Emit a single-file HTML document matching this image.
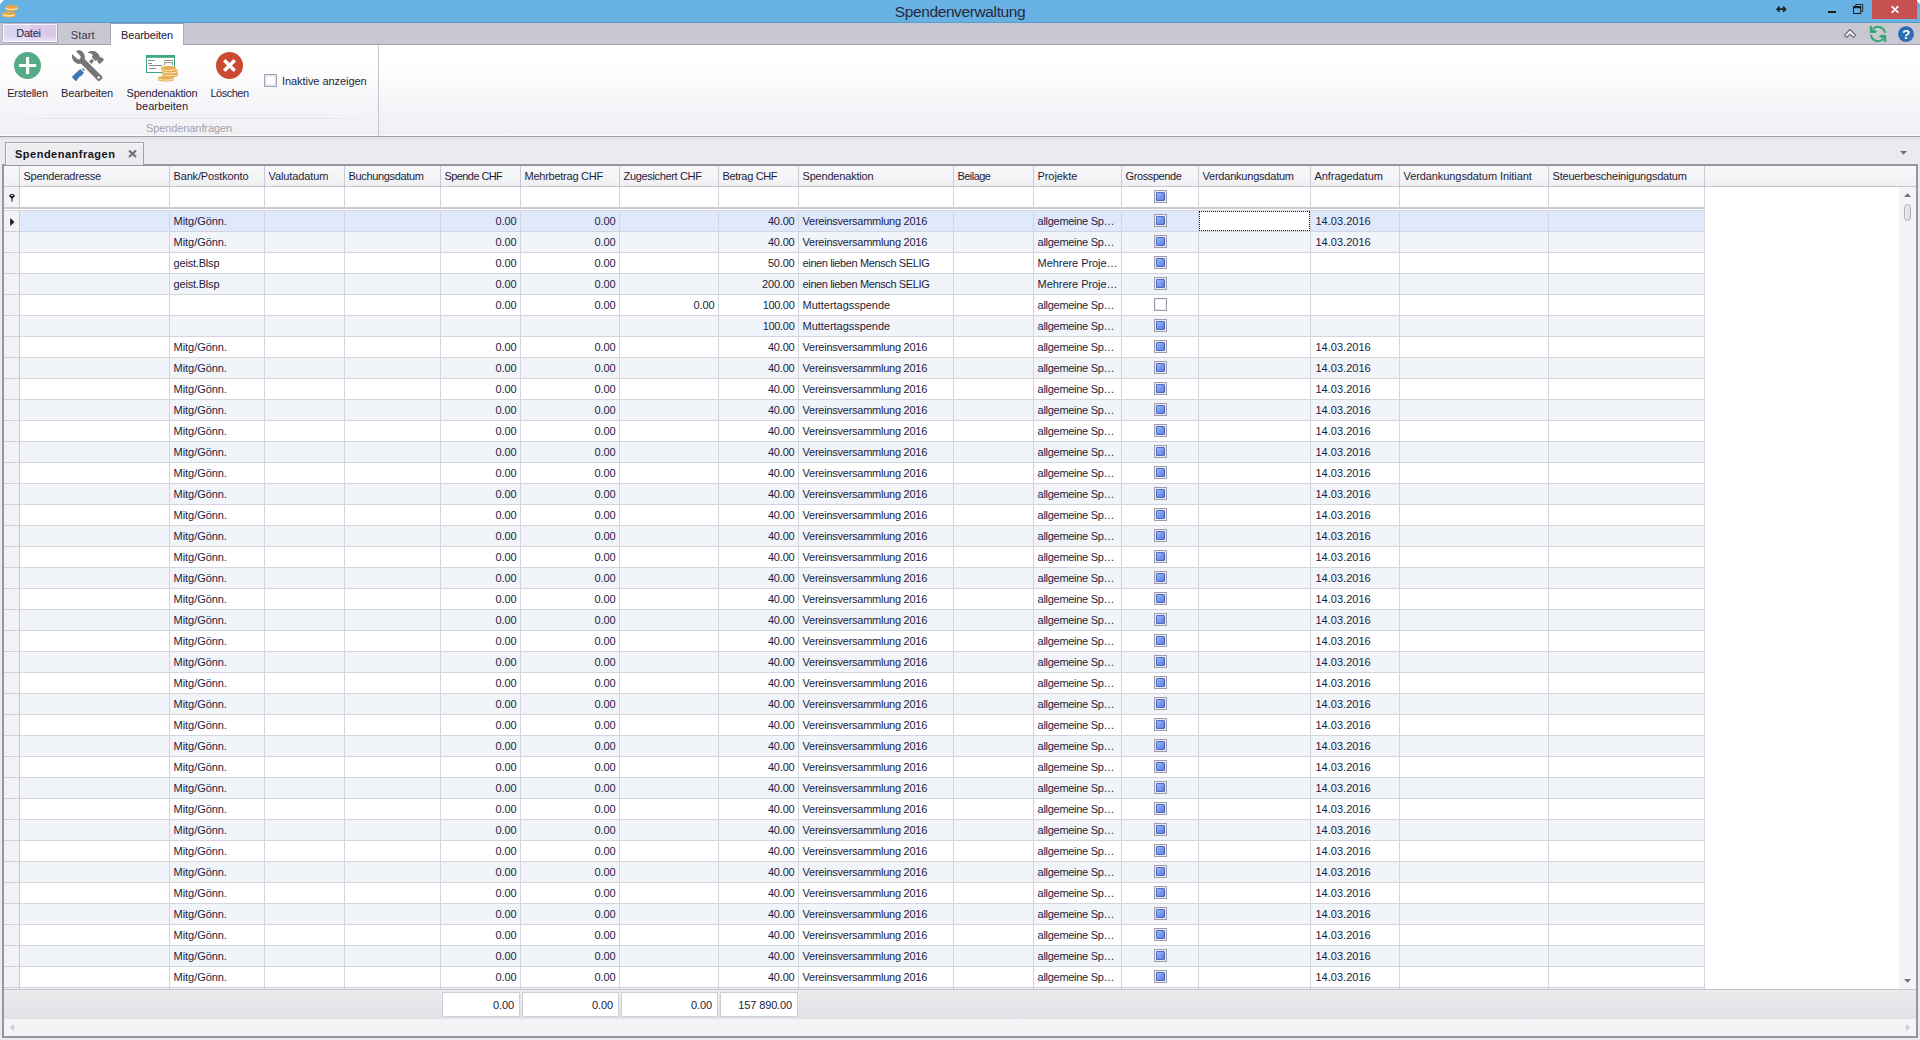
<!DOCTYPE html>
<html lang="de"><head><meta charset="utf-8"><title>Spendenverwaltung</title>
<style>
*,*:after,*:before{box-sizing:border-box;margin:0;padding:0}
html,body{width:1920px;height:1040px;overflow:hidden;background:#ebebef;font-family:"Liberation Sans",sans-serif;font-size:11px;color:#1c1c3c}
body{position:relative}
.abs{position:absolute}
#title{position:absolute;left:0;top:0;width:1920px;height:23px;background:#68b1e3;border-bottom:1px solid #5b9ccb}
#title .t{position:absolute;left:0;width:1920px;top:2px;text-align:center;font-size:15.5px;line-height:19px;color:#252a3c;letter-spacing:-0.38px}
#tabs{position:absolute;left:0;top:23px;width:1920px;height:22px;background:#c8c8d2;border-bottom:1px solid #a3a3b3}
#ribbon{position:absolute;left:0;top:45px;width:1920px;height:92px;background:linear-gradient(#fff 0,#fefefe 25%,#f6f6f9 60%,#eff0f4 100%);border-bottom:1px solid #9d9eae;box-shadow:inset 0 -1px 0 #f8f8fa}
.rl{position:absolute;text-align:center;white-space:nowrap;line-height:13px;font-size:11px;color:#1d1d40}
.grid{position:absolute;left:2px;top:164px;width:1916px;height:874px;border:2px solid #9495a5;background:#fff;overflow:hidden}
.hdr{position:absolute;left:0;top:0;width:1912px;height:21px;border-bottom:1px solid #c4c4d0;background:linear-gradient(#f9f9fa,#f0f0f3)}
.hc{position:absolute;top:0;height:20px;border-right:1px solid #c9c9d3;line-height:20px;padding-left:3.5px;white-space:nowrap;overflow:hidden}
.hc.last{border-right:none}
.frow{position:absolute;left:0;top:21px;width:1701px;height:20px;background:#fff}
.fsep{position:absolute;left:0;top:41px;width:1701px;height:2px;background:#cacad3}
.fsep2{position:absolute;left:0;top:44px;width:1701px;height:1px;background:#d6d6de}
.row{position:absolute;left:0;width:1701px;height:21px;border-bottom:1px solid #d4d4dc;background:#fff}
.row.alt{background:#f1f4f9}
.row.foc{background:#e0e8fc}
.c{position:absolute;top:0;height:20px;border-right:1px solid #d4d4dc;line-height:20px;padding:0 3px;white-space:nowrap;overflow:hidden}
.c.al{padding-left:3.6px}
.c.ar{text-align:right;padding-right:3.5px}
.c.ac{text-align:center}
.c.fc{background:#fff}
.c.fc:after{content:"";position:absolute;left:0;top:0;right:0;bottom:0;border:1px dotted #1a1a1a}
.c.dt{padding-left:4.4px}
.ic{position:absolute;top:0;height:20px;border-right:1px solid #c9c9d3;background:#f3f3f5}
.row .ic{height:21px;border-bottom:1px solid #d0d0d8}
.ai{position:absolute;left:6px;top:6.6px}
.fi{position:absolute;left:4.6px;top:6.8px}
.cb{position:absolute;left:32px;top:3px;width:13px;height:13px;border:1px solid #9c9caa;background:#ececf0}
.cb.ck:after{content:"";position:absolute;left:1px;top:1px;width:9px;height:9px;background:linear-gradient(135deg,#a3b9f1 0,#7f9ce8 45%,#5e80de 100%);border:1px solid #4a69c9;border-right-color:#3f5ec2;border-radius:1.5px}
.cb:not(.ck):after{content:"";position:absolute;left:1px;top:1px;width:9px;height:9px;background:#fff}
.foot{position:absolute;left:0;top:823px;width:1912px;height:30px;border-top:1px solid #c2c2cc;background:linear-gradient(#ececef,#e2e2e6)}
.sb{position:absolute;top:2px;height:25px;background:#fff;border:1px solid #cfcfd8;line-height:24.6px;text-align:right;padding-right:5px}
.hs{position:absolute;left:0;top:853px;width:1912px;height:17px;background:#f4f4f6}
.vs{position:absolute;left:1895px;top:21px;width:17px;height:802px;background:#f4f4f6}

.k0{letter-spacing:-0.25px}
.k1{letter-spacing:-0.139px}
.k2{letter-spacing:-0.188px}
.k3{letter-spacing:0.028px}
.k4{letter-spacing:-0.5px}
.k5{letter-spacing:-0.062px}
.k6{letter-spacing:-0.089px}
.k7{letter-spacing:-0.188px}
.k8{letter-spacing:0.188px}
.k9{letter-spacing:-0.231px}
.k10{letter-spacing:-0.154px}
.k11{letter-spacing:-0.1px}
.k12{letter-spacing:-0.333px}
.k13{letter-spacing:-0.583px}
.k14{letter-spacing:-0.25px}
.k15{letter-spacing:-0.339px}
.k16{letter-spacing:-0.333px}
.k17{letter-spacing:-0.542px}
.k18{letter-spacing:-0.071px}
.k19{letter-spacing:-0.389px}
.k20{letter-spacing:-0.217px}
.k21{letter-spacing:-0.068px}
.k22{letter-spacing:-0.083px}
.k23{letter-spacing:-0.208px}
.k24{letter-spacing:-0.056px}
.k25{letter-spacing:-0.194px}
.k26{letter-spacing:-0.083px}
.k27{letter-spacing:-0.188px}
.k28{letter-spacing:-0.188px}
.k29{letter-spacing:-0.2px}
.k30{letter-spacing:-0.3px}
.k31{letter-spacing:-0.25px}
.k32{letter-spacing:-0.385px}
.k33{letter-spacing:-0.033px}
.k34{letter-spacing:-0.288px}
.k35{letter-spacing:-0.058px}
.k36{letter-spacing:0.03px}
.k37{letter-spacing:-0.139px}
</style></head>
<body>
<div id="title">
<svg class="abs" style="left:0;top:0" width="22" height="22" viewBox="0 0 22 22"><ellipse cx="8.8" cy="15.7" rx="6.8" ry="1.9" fill="#eaa840"/><ellipse cx="8.8" cy="14.60" rx="6.3999999999999995" ry="1.8" fill="#fdf2dc"/><ellipse cx="8.8" cy="13.4" rx="6.8" ry="1.8" fill="#eaa840"/><ellipse cx="11.6" cy="9.2" rx="6.6" ry="1.9" fill="#eaa840"/><ellipse cx="11.6" cy="8.10" rx="6.199999999999999" ry="1.8" fill="#fdf2dc"/><ellipse cx="11.6" cy="6.9" rx="6.6" ry="1.8" fill="#eaa840"/><path d="M0 0H4L0 4z" fill="#fff"/></svg><svg class="abs" style="left:1916px;top:0" width="4" height="4" viewBox="0 0 4 4"><path d="M0 0H4V4z" fill="#fff"/></svg>
<div class="t">Spendenverwaltung</div>
<svg class="abs" style="left:1776px;top:5.7px" width="11" height="7" viewBox="0 0 11 7"><path d="M0 3.2L3 0.1L4.1 1.2L3 2.3H7.6L6.5 1.2L7.6 0.1L10.6 3.2L7.6 6.3L6.5 5.2L7.6 4.1H3L4.1 5.2L3 6.3z" fill="#1c1c1c"/></svg>
<div class="abs" style="left:1828px;top:11px;width:8px;height:2px;background:#1e1e1e"></div>
<svg class="abs" style="left:1853px;top:4px" width="11" height="11" viewBox="0 0 11 11"><path d="M2.8 2.2V0.5H9.7V7.5H8.2" fill="none" stroke="#1c1c1c" stroke-width="0.9"/><rect x="0.5" y="2.7" width="7.2" height="6.8" fill="none" stroke="#1c1c1c" stroke-width="1"/><rect x="0" y="2.2" width="8.2" height="2" fill="#1c1c1c"/></svg>
<div class="abs" style="left:1872px;top:0;width:45px;height:19px;background:#c75050"></div>
<svg class="abs" style="left:1891px;top:6px" width="8" height="7" viewBox="0 0 8 7"><path d="M0.6 0.2L7.4 6.8M7.4 0.2L0.6 6.8" stroke="#fff" stroke-width="1.7"/></svg>
</div>
<div id="tabs">
<div class="abs" style="left:2px;top:0;width:56px;height:20px;padding-top:1px;border:1px solid #b9b9ca;border-right-color:#a6a6b8;border-bottom-color:#a6a6b8;border-radius:2px;background:linear-gradient(105deg,#d9d6f0 0,#dcd4ee 30%,#e6daf2 44%,#dcc4e8 52%,#dfcaea 70%,#d8c4ea 100%);box-shadow:inset 0 0 0 1px rgba(255,255,255,.75),inset 0 -5px 5px -2px rgba(245,240,255,.8);text-align:center;padding-right:3px;line-height:17px;font-size:11px;color:#25254c"><span class="k7">Datei</span></div>
<div class="abs" style="left:70.7px;top:6px;font-size:11px;line-height:13px;color:#3a3a52"><span class="k8">Start</span></div>
<div class="abs" style="left:110px;top:0;width:74px;height:22px;border:1px solid #a9a9b7;border-top-color:#8e9db6;border-bottom:none;background:#fff;text-align:center;line-height:23px;font-size:11px;color:#20203a"><span class="k1">Bearbeiten</span></div>
<svg class="abs" style="left:1843px;top:5px" width="14" height="12" viewBox="0 0 14 12"><path d="M7 1.5L12.5 7.2L10.4 9.5L7 6.2L3.6 9.5L1.5 7.2z" fill="#f3f3f7" stroke="#686876" stroke-width="1.1" stroke-linejoin="round"/></svg>
<svg class="abs" style="left:1869px;top:2px" width="18" height="18" viewBox="0 0 18 18"><path d="M3.98 3.98A7.1 7.1 0 0 1 16.03 8.01" fill="none" stroke="#33a873" stroke-width="2"/><path d="M14.02 14.02A7.1 7.1 0 0 1 1.97 9.99" fill="none" stroke="#33a873" stroke-width="2"/><path d="M0.8 1H2.8L3.7 4.5L7.9 6.2L6.8 8H0.8z" fill="#33a873"/><path d="M17.2 17H15.2L14.3 13.5L10.1 11.8L11.2 10H17.2z" fill="#33a873"/></svg>
<svg class="abs" style="left:1898px;top:2.7px" width="16" height="17" viewBox="0 0 16 17"><circle cx="8" cy="8.2" r="7.9" fill="#2d6cb0"/><text x="8.1" y="13" text-anchor="middle" font-family="Liberation Sans" font-weight="bold" font-size="13.5" fill="#fff">?</text></svg>
</div>
<div id="ribbon">
<div class="abs" style="left:378px;top:0;width:1px;height:91px;background:#c6c6d0"></div>
<div class="abs" style="left:8px;top:73px;width:364px;height:1px;background:linear-gradient(90deg,rgba(226,226,232,0),#e3e3e9 12%,#e3e3e9 88%,rgba(226,226,232,0))"></div>
<!-- Erstellen -->
<svg class="abs" style="left:14px;top:7px" width="27" height="27" viewBox="0 0 27 27"><circle cx="13.5" cy="13.5" r="13.5" fill="#55ab87"/><path d="M13.6 5V22M5 13.5H22.2" stroke="#fff" stroke-width="3.2"/></svg>
<div class="rl" style="left:0;top:42px;width:55px"><span class="k0">Erstellen</span></div>
<!-- Bearbeiten -->
<svg class="abs" style="left:60px;top:0" width="60" height="40" viewBox="0 0 60 40"><path d="M16 6.3L18.5 5L20.6 5.4C22 6 23.4 7.6 24.2 9.2C25 11 25.2 12.4 24.6 13.9L42.2 31.4C42.8 32.2 42.6 33 42 33.7L39.9 35.8C39.2 36.4 38.5 36.4 37.8 35.7L21.4 18.9C20.4 18.6 19.4 19 18.2 18.9C16.6 18.8 15.2 17.8 14.2 16.6C12.9 15.2 12.2 13.6 12 12L12 9L17.4 14.1C18.2 14.8 19.3 14.6 20 13.8C20.8 12.9 21 11.8 20.2 10.8z" fill="#767676"/><path d="M38.7 30.9L40.3 32.5L38.7 34.1L37.1 32.5z" fill="#fcfcfd"/><path d="M27.1 7.4C28.4 6.6 30 6.2 31.6 6.1C33.4 6 35 6.2 36.4 7.2C37.8 8.2 39 9.6 39.6 11L40.1 12.7L41.3 12.1L44.1 14.8L40 19L38.4 18C37.8 17 37.4 15.8 36.9 15L35.5 15.9L33 13.4L32 12C31.8 11.4 32.2 10.8 32.8 10.4C32.4 9.4 31.6 8.8 30.6 8.4C29.6 7.9 28.4 7.6 27.1 7.4z" fill="#767676"/><path d="M31.9 13.8L34 15.7L31.5 19L29 16.5z" fill="#767676"/><path d="M22.9 23.1L25 25L24 26L21.9 24z" fill="#767676"/><path d="M20.2 24L24 27.5L21.6 30.8L19.2 32L16.3 35.9L15.5 36L11.9 32L13.8 30z" fill="#3b78b8"/></svg>
<div class="rl" style="left:57px;top:42px;width:60px"><span class="k1">Bearbeiten</span></div>
<!-- Spendenaktion bearbeiten -->
<svg class="abs" style="left:135px;top:0" width="60" height="40" viewBox="0 0 60 40"><rect x="11.5" y="10.5" width="28" height="17" fill="#fff" stroke="#3fa87c" stroke-width="1"/><rect x="11" y="10" width="29" height="2.8" fill="#3fa87c"/><path d="M13 15.5H20M13 18.5H17M14 20.5H27.2M14 23.5H21M29 15.5H38" stroke="#8c8c8c" stroke-width="1"/><path d="M29.5 20.2V17.6H37.5V20.2" fill="none" stroke="#8c8c8c" stroke-width="1"/><path d="M23.2 25.6L24.4 23.4" stroke="#d0d0d4" stroke-width="0.7"/>
<ellipse cx="30.8" cy="34.7" rx="8" ry="1.9" fill="#e8ad4e"/><ellipse cx="30.8" cy="33.65" rx="7.5" ry="1.8" fill="#f8ebd0"/><ellipse cx="30.8" cy="32.7" rx="8" ry="1.8" fill="#e8ad4e"/><ellipse cx="35.1" cy="30.4" rx="8" ry="1.9" fill="#e8ad4e"/><ellipse cx="35.1" cy="29.35" rx="7.5" ry="1.8" fill="#f8ebd0"/><ellipse cx="35.1" cy="28.4" rx="8" ry="1.8" fill="#e8ad4e"/><ellipse cx="35.1" cy="27.6" rx="8" ry="1.9" fill="#e8ad4e"/><ellipse cx="35.1" cy="26.55" rx="7.5" ry="1.8" fill="#f8ebd0"/><ellipse cx="35.1" cy="25.6" rx="8" ry="1.8" fill="#e8ad4e"/><ellipse cx="33.5" cy="24.9" rx="7.6" ry="2.1" fill="#e8ad4e"/><ellipse cx="33.5" cy="23.85" rx="7.1" ry="2.0" fill="#f8ebd0"/><ellipse cx="33.5" cy="22.9" rx="7.6" ry="2.0" fill="#e8ad4e"/></svg>
<div class="rl" style="left:120px;top:42px;width:84px"><span class="k2">Spendenaktion</span><br><span class="k3">bearbeiten</span></div>
<!-- Löschen -->
<svg class="abs" style="left:216px;top:7px" width="27" height="27" viewBox="0 0 27 27"><circle cx="13.5" cy="13.5" r="13.5" fill="#cc4a31"/><path d="M8.2 8.2L18.8 18.8M18.8 8.2L8.2 18.8" stroke="#fff" stroke-width="3.4"/></svg>
<div class="rl" style="left:204px;top:42px;width:51px"><span class="k4">Löschen</span></div>
<!-- checkbox -->
<div class="abs" style="left:264px;top:29px;width:13px;height:13px;border:1px solid #a2a2b2;background:#fff;box-shadow:inset 0 0 0 1.5px #e3e3ea"></div>
<div class="rl" style="left:282px;top:30px;text-align:left"><span class="k5">Inaktive anzeigen</span></div>
<div class="rl" style="left:14px;top:77px;width:350px;color:#a2a2ac"><span class="k6">Spendenanfragen</span></div>
</div>
<!-- doc tab -->
<div class="abs" style="left:0;top:137px;width:1920px;height:3px;background:linear-gradient(#dcdce3,#ebebef)"></div>
<div class="abs" style="left:5px;top:142px;width:139px;height:23px;z-index:2;border:1px solid #9fa0b0;border-bottom:none;background:linear-gradient(#eeeef1,#eaeaee);box-shadow:inset 1px 1px 0 rgba(255,255,255,.6)"></div>
<div class="abs" style="left:15px;top:148px;z-index:3;font-weight:bold;font-size:11px;line-height:13px;letter-spacing:0.5px;color:#14141e;white-space:nowrap">Spendenanfragen</div>
<svg class="abs" style="left:128px;top:150px;z-index:3" width="9" height="8" viewBox="0 0 9 8"><path d="M1 0.4L8 7.1M8 0.4L1 7.1" stroke="#72727e" stroke-width="2.1"/></svg>
<svg class="abs" style="left:1900px;top:151px" width="7" height="4" viewBox="0 0 7 4"><path d="M0 0H7L3.5 3.8z" fill="#6e6e80"/></svg>
<div class="grid">
<div class="hdr"><div class="hc ind" style="left:0;width:16px"></div><div class="hc" style="left:16px;width:150px"><span class="k9">Spenderadresse</span></div><div class="hc" style="left:166px;width:95px"><span class="k10">Bank/Postkonto</span></div><div class="hc" style="left:261px;width:80px"><span class="k11">Valutadatum</span></div><div class="hc" style="left:341px;width:96px"><span class="k12">Buchungsdatum</span></div><div class="hc" style="left:437px;width:80px"><span class="k13">Spende CHF</span></div><div class="hc" style="left:517px;width:99px"><span class="k14">Mehrbetrag CHF</span></div><div class="hc" style="left:616px;width:99px"><span class="k15">Zugesichert CHF</span></div><div class="hc" style="left:715px;width:80px"><span class="k16">Betrag CHF</span></div><div class="hc" style="left:795px;width:155px"><span class="k2">Spendenaktion</span></div><div class="hc" style="left:950px;width:80px"><span class="k17">Beilage</span></div><div class="hc" style="left:1030px;width:88px"><span class="k18">Projekte</span></div><div class="hc" style="left:1118px;width:77px"><span class="k19">Grosspende</span></div><div class="hc" style="left:1195px;width:112px"><span class="k20">Verdankungsdatum</span></div><div class="hc" style="left:1307px;width:89px"><span class="k21">Anfragedatum</span></div><div class="hc" style="left:1396px;width:149px"><span class="k22">Verdankungsdatum Initiant</span></div><div class="hc" style="left:1545px;width:156px"><span class="k23">Steuerbescheinigungsdatum</span></div><div class="hc last" style="left:1701px;width:211px"></div></div>
<div class="frow"><div class="ic" style="left:0;width:16px;height:20px"><svg class="fi" width="6" height="8" viewBox="0 0 6 8"><ellipse cx="3" cy="1.7" rx="2.8" ry="1.7" fill="#16162a"/><path d="M0.4 2.2H5.6L3.55 4.6V7.5H2.45V4.6z" fill="#16162a"/><ellipse cx="3" cy="1.5" rx="1.4" ry="0.6" fill="#f0f0f4"/></svg></div><div class="c al" style="left:16px;width:150px"></div><div class="c al" style="left:166px;width:95px"></div><div class="c al" style="left:261px;width:80px"></div><div class="c al" style="left:341px;width:96px"></div><div class="c ar" style="left:437px;width:80px"></div><div class="c ar" style="left:517px;width:99px"></div><div class="c ar" style="left:616px;width:99px"></div><div class="c ar" style="left:715px;width:80px"></div><div class="c al" style="left:795px;width:155px"></div><div class="c al" style="left:950px;width:80px"></div><div class="c al" style="left:1030px;width:88px"></div><div class="c ac" style="left:1118px;width:77px"><i class="cb ck"></i></div><div class="c al" style="left:1195px;width:112px"></div><div class="c al" style="left:1307px;width:89px"></div><div class="c al" style="left:1396px;width:149px"></div><div class="c al" style="left:1545px;width:156px"></div></div>
<div class="fsep"></div><div class="fsep2"></div>
<div class="row foc" style="top:45px"><div class="ic" style="left:0;width:16px"><svg class="ai" width="5" height="8" viewBox="0 0 5 8"><path d="M0.2 0L4.4 4L0.2 8z" fill="#15152a"/></svg></div><div class="c al" style="left:16px;width:150px"></div><div class="c al" style="left:166px;width:95px"><span class="k24">Mitg/Gönn.</span></div><div class="c al" style="left:261px;width:80px"></div><div class="c al" style="left:341px;width:96px"></div><div class="c ar" style="left:437px;width:80px"><span class="k26">0.00</span></div><div class="c ar" style="left:517px;width:99px"><span class="k26">0.00</span></div><div class="c ar" style="left:616px;width:99px"></div><div class="c ar" style="left:715px;width:80px"><span class="k27">40.00</span></div><div class="c al" style="left:795px;width:155px"><span class="k31">Vereinsversammlung 2016</span></div><div class="c al" style="left:950px;width:80px"></div><div class="c al" style="left:1030px;width:88px"><span class="k34">allgemeine Sp…</span></div><div class="c ac" style="left:1118px;width:77px"><i class="cb ck"></i></div><div class="c al fc" style="left:1195px;width:112px"></div><div class="c al dt" style="left:1307px;width:89px"><span class="k36">14.03.2016</span></div><div class="c al" style="left:1396px;width:149px"></div><div class="c al" style="left:1545px;width:156px"></div></div>
<div class="row alt" style="top:66px"><div class="ic" style="left:0;width:16px"></div><div class="c al" style="left:16px;width:150px"></div><div class="c al" style="left:166px;width:95px"><span class="k24">Mitg/Gönn.</span></div><div class="c al" style="left:261px;width:80px"></div><div class="c al" style="left:341px;width:96px"></div><div class="c ar" style="left:437px;width:80px"><span class="k26">0.00</span></div><div class="c ar" style="left:517px;width:99px"><span class="k26">0.00</span></div><div class="c ar" style="left:616px;width:99px"></div><div class="c ar" style="left:715px;width:80px"><span class="k27">40.00</span></div><div class="c al" style="left:795px;width:155px"><span class="k31">Vereinsversammlung 2016</span></div><div class="c al" style="left:950px;width:80px"></div><div class="c al" style="left:1030px;width:88px"><span class="k34">allgemeine Sp…</span></div><div class="c ac" style="left:1118px;width:77px"><i class="cb ck"></i></div><div class="c al" style="left:1195px;width:112px"></div><div class="c al dt" style="left:1307px;width:89px"><span class="k36">14.03.2016</span></div><div class="c al" style="left:1396px;width:149px"></div><div class="c al" style="left:1545px;width:156px"></div></div>
<div class="row" style="top:87px"><div class="ic" style="left:0;width:16px"></div><div class="c al" style="left:16px;width:150px"></div><div class="c al" style="left:166px;width:95px"><span class="k25">geist.Blsp</span></div><div class="c al" style="left:261px;width:80px"></div><div class="c al" style="left:341px;width:96px"></div><div class="c ar" style="left:437px;width:80px"><span class="k26">0.00</span></div><div class="c ar" style="left:517px;width:99px"><span class="k26">0.00</span></div><div class="c ar" style="left:616px;width:99px"></div><div class="c ar" style="left:715px;width:80px"><span class="k28">50.00</span></div><div class="c al" style="left:795px;width:155px"><span class="k32">einen lieben Mensch SELIG</span></div><div class="c al" style="left:950px;width:80px"></div><div class="c al" style="left:1030px;width:88px"><span class="k35">Mehrere Proje…</span></div><div class="c ac" style="left:1118px;width:77px"><i class="cb ck"></i></div><div class="c al" style="left:1195px;width:112px"></div><div class="c al" style="left:1307px;width:89px"></div><div class="c al" style="left:1396px;width:149px"></div><div class="c al" style="left:1545px;width:156px"></div></div>
<div class="row alt" style="top:108px"><div class="ic" style="left:0;width:16px"></div><div class="c al" style="left:16px;width:150px"></div><div class="c al" style="left:166px;width:95px"><span class="k25">geist.Blsp</span></div><div class="c al" style="left:261px;width:80px"></div><div class="c al" style="left:341px;width:96px"></div><div class="c ar" style="left:437px;width:80px"><span class="k26">0.00</span></div><div class="c ar" style="left:517px;width:99px"><span class="k26">0.00</span></div><div class="c ar" style="left:616px;width:99px"></div><div class="c ar" style="left:715px;width:80px"><span class="k29">200.00</span></div><div class="c al" style="left:795px;width:155px"><span class="k32">einen lieben Mensch SELIG</span></div><div class="c al" style="left:950px;width:80px"></div><div class="c al" style="left:1030px;width:88px"><span class="k35">Mehrere Proje…</span></div><div class="c ac" style="left:1118px;width:77px"><i class="cb ck"></i></div><div class="c al" style="left:1195px;width:112px"></div><div class="c al" style="left:1307px;width:89px"></div><div class="c al" style="left:1396px;width:149px"></div><div class="c al" style="left:1545px;width:156px"></div></div>
<div class="row" style="top:129px"><div class="ic" style="left:0;width:16px"></div><div class="c al" style="left:16px;width:150px"></div><div class="c al" style="left:166px;width:95px"></div><div class="c al" style="left:261px;width:80px"></div><div class="c al" style="left:341px;width:96px"></div><div class="c ar" style="left:437px;width:80px"><span class="k26">0.00</span></div><div class="c ar" style="left:517px;width:99px"><span class="k26">0.00</span></div><div class="c ar" style="left:616px;width:99px"><span class="k26">0.00</span></div><div class="c ar" style="left:715px;width:80px"><span class="k30">100.00</span></div><div class="c al" style="left:795px;width:155px"><span class="k33">Muttertagsspende</span></div><div class="c al" style="left:950px;width:80px"></div><div class="c al" style="left:1030px;width:88px"><span class="k34">allgemeine Sp…</span></div><div class="c ac" style="left:1118px;width:77px"><i class="cb"></i></div><div class="c al" style="left:1195px;width:112px"></div><div class="c al" style="left:1307px;width:89px"></div><div class="c al" style="left:1396px;width:149px"></div><div class="c al" style="left:1545px;width:156px"></div></div>
<div class="row alt" style="top:150px"><div class="ic" style="left:0;width:16px"></div><div class="c al" style="left:16px;width:150px"></div><div class="c al" style="left:166px;width:95px"></div><div class="c al" style="left:261px;width:80px"></div><div class="c al" style="left:341px;width:96px"></div><div class="c ar" style="left:437px;width:80px"></div><div class="c ar" style="left:517px;width:99px"></div><div class="c ar" style="left:616px;width:99px"></div><div class="c ar" style="left:715px;width:80px"><span class="k30">100.00</span></div><div class="c al" style="left:795px;width:155px"><span class="k33">Muttertagsspende</span></div><div class="c al" style="left:950px;width:80px"></div><div class="c al" style="left:1030px;width:88px"><span class="k34">allgemeine Sp…</span></div><div class="c ac" style="left:1118px;width:77px"><i class="cb ck"></i></div><div class="c al" style="left:1195px;width:112px"></div><div class="c al" style="left:1307px;width:89px"></div><div class="c al" style="left:1396px;width:149px"></div><div class="c al" style="left:1545px;width:156px"></div></div>
<div class="row" style="top:171px"><div class="ic" style="left:0;width:16px"></div><div class="c al" style="left:16px;width:150px"></div><div class="c al" style="left:166px;width:95px"><span class="k24">Mitg/Gönn.</span></div><div class="c al" style="left:261px;width:80px"></div><div class="c al" style="left:341px;width:96px"></div><div class="c ar" style="left:437px;width:80px"><span class="k26">0.00</span></div><div class="c ar" style="left:517px;width:99px"><span class="k26">0.00</span></div><div class="c ar" style="left:616px;width:99px"></div><div class="c ar" style="left:715px;width:80px"><span class="k27">40.00</span></div><div class="c al" style="left:795px;width:155px"><span class="k31">Vereinsversammlung 2016</span></div><div class="c al" style="left:950px;width:80px"></div><div class="c al" style="left:1030px;width:88px"><span class="k34">allgemeine Sp…</span></div><div class="c ac" style="left:1118px;width:77px"><i class="cb ck"></i></div><div class="c al" style="left:1195px;width:112px"></div><div class="c al dt" style="left:1307px;width:89px"><span class="k36">14.03.2016</span></div><div class="c al" style="left:1396px;width:149px"></div><div class="c al" style="left:1545px;width:156px"></div></div>
<div class="row alt" style="top:192px"><div class="ic" style="left:0;width:16px"></div><div class="c al" style="left:16px;width:150px"></div><div class="c al" style="left:166px;width:95px"><span class="k24">Mitg/Gönn.</span></div><div class="c al" style="left:261px;width:80px"></div><div class="c al" style="left:341px;width:96px"></div><div class="c ar" style="left:437px;width:80px"><span class="k26">0.00</span></div><div class="c ar" style="left:517px;width:99px"><span class="k26">0.00</span></div><div class="c ar" style="left:616px;width:99px"></div><div class="c ar" style="left:715px;width:80px"><span class="k27">40.00</span></div><div class="c al" style="left:795px;width:155px"><span class="k31">Vereinsversammlung 2016</span></div><div class="c al" style="left:950px;width:80px"></div><div class="c al" style="left:1030px;width:88px"><span class="k34">allgemeine Sp…</span></div><div class="c ac" style="left:1118px;width:77px"><i class="cb ck"></i></div><div class="c al" style="left:1195px;width:112px"></div><div class="c al dt" style="left:1307px;width:89px"><span class="k36">14.03.2016</span></div><div class="c al" style="left:1396px;width:149px"></div><div class="c al" style="left:1545px;width:156px"></div></div>
<div class="row" style="top:213px"><div class="ic" style="left:0;width:16px"></div><div class="c al" style="left:16px;width:150px"></div><div class="c al" style="left:166px;width:95px"><span class="k24">Mitg/Gönn.</span></div><div class="c al" style="left:261px;width:80px"></div><div class="c al" style="left:341px;width:96px"></div><div class="c ar" style="left:437px;width:80px"><span class="k26">0.00</span></div><div class="c ar" style="left:517px;width:99px"><span class="k26">0.00</span></div><div class="c ar" style="left:616px;width:99px"></div><div class="c ar" style="left:715px;width:80px"><span class="k27">40.00</span></div><div class="c al" style="left:795px;width:155px"><span class="k31">Vereinsversammlung 2016</span></div><div class="c al" style="left:950px;width:80px"></div><div class="c al" style="left:1030px;width:88px"><span class="k34">allgemeine Sp…</span></div><div class="c ac" style="left:1118px;width:77px"><i class="cb ck"></i></div><div class="c al" style="left:1195px;width:112px"></div><div class="c al dt" style="left:1307px;width:89px"><span class="k36">14.03.2016</span></div><div class="c al" style="left:1396px;width:149px"></div><div class="c al" style="left:1545px;width:156px"></div></div>
<div class="row alt" style="top:234px"><div class="ic" style="left:0;width:16px"></div><div class="c al" style="left:16px;width:150px"></div><div class="c al" style="left:166px;width:95px"><span class="k24">Mitg/Gönn.</span></div><div class="c al" style="left:261px;width:80px"></div><div class="c al" style="left:341px;width:96px"></div><div class="c ar" style="left:437px;width:80px"><span class="k26">0.00</span></div><div class="c ar" style="left:517px;width:99px"><span class="k26">0.00</span></div><div class="c ar" style="left:616px;width:99px"></div><div class="c ar" style="left:715px;width:80px"><span class="k27">40.00</span></div><div class="c al" style="left:795px;width:155px"><span class="k31">Vereinsversammlung 2016</span></div><div class="c al" style="left:950px;width:80px"></div><div class="c al" style="left:1030px;width:88px"><span class="k34">allgemeine Sp…</span></div><div class="c ac" style="left:1118px;width:77px"><i class="cb ck"></i></div><div class="c al" style="left:1195px;width:112px"></div><div class="c al dt" style="left:1307px;width:89px"><span class="k36">14.03.2016</span></div><div class="c al" style="left:1396px;width:149px"></div><div class="c al" style="left:1545px;width:156px"></div></div>
<div class="row" style="top:255px"><div class="ic" style="left:0;width:16px"></div><div class="c al" style="left:16px;width:150px"></div><div class="c al" style="left:166px;width:95px"><span class="k24">Mitg/Gönn.</span></div><div class="c al" style="left:261px;width:80px"></div><div class="c al" style="left:341px;width:96px"></div><div class="c ar" style="left:437px;width:80px"><span class="k26">0.00</span></div><div class="c ar" style="left:517px;width:99px"><span class="k26">0.00</span></div><div class="c ar" style="left:616px;width:99px"></div><div class="c ar" style="left:715px;width:80px"><span class="k27">40.00</span></div><div class="c al" style="left:795px;width:155px"><span class="k31">Vereinsversammlung 2016</span></div><div class="c al" style="left:950px;width:80px"></div><div class="c al" style="left:1030px;width:88px"><span class="k34">allgemeine Sp…</span></div><div class="c ac" style="left:1118px;width:77px"><i class="cb ck"></i></div><div class="c al" style="left:1195px;width:112px"></div><div class="c al dt" style="left:1307px;width:89px"><span class="k36">14.03.2016</span></div><div class="c al" style="left:1396px;width:149px"></div><div class="c al" style="left:1545px;width:156px"></div></div>
<div class="row alt" style="top:276px"><div class="ic" style="left:0;width:16px"></div><div class="c al" style="left:16px;width:150px"></div><div class="c al" style="left:166px;width:95px"><span class="k24">Mitg/Gönn.</span></div><div class="c al" style="left:261px;width:80px"></div><div class="c al" style="left:341px;width:96px"></div><div class="c ar" style="left:437px;width:80px"><span class="k26">0.00</span></div><div class="c ar" style="left:517px;width:99px"><span class="k26">0.00</span></div><div class="c ar" style="left:616px;width:99px"></div><div class="c ar" style="left:715px;width:80px"><span class="k27">40.00</span></div><div class="c al" style="left:795px;width:155px"><span class="k31">Vereinsversammlung 2016</span></div><div class="c al" style="left:950px;width:80px"></div><div class="c al" style="left:1030px;width:88px"><span class="k34">allgemeine Sp…</span></div><div class="c ac" style="left:1118px;width:77px"><i class="cb ck"></i></div><div class="c al" style="left:1195px;width:112px"></div><div class="c al dt" style="left:1307px;width:89px"><span class="k36">14.03.2016</span></div><div class="c al" style="left:1396px;width:149px"></div><div class="c al" style="left:1545px;width:156px"></div></div>
<div class="row" style="top:297px"><div class="ic" style="left:0;width:16px"></div><div class="c al" style="left:16px;width:150px"></div><div class="c al" style="left:166px;width:95px"><span class="k24">Mitg/Gönn.</span></div><div class="c al" style="left:261px;width:80px"></div><div class="c al" style="left:341px;width:96px"></div><div class="c ar" style="left:437px;width:80px"><span class="k26">0.00</span></div><div class="c ar" style="left:517px;width:99px"><span class="k26">0.00</span></div><div class="c ar" style="left:616px;width:99px"></div><div class="c ar" style="left:715px;width:80px"><span class="k27">40.00</span></div><div class="c al" style="left:795px;width:155px"><span class="k31">Vereinsversammlung 2016</span></div><div class="c al" style="left:950px;width:80px"></div><div class="c al" style="left:1030px;width:88px"><span class="k34">allgemeine Sp…</span></div><div class="c ac" style="left:1118px;width:77px"><i class="cb ck"></i></div><div class="c al" style="left:1195px;width:112px"></div><div class="c al dt" style="left:1307px;width:89px"><span class="k36">14.03.2016</span></div><div class="c al" style="left:1396px;width:149px"></div><div class="c al" style="left:1545px;width:156px"></div></div>
<div class="row alt" style="top:318px"><div class="ic" style="left:0;width:16px"></div><div class="c al" style="left:16px;width:150px"></div><div class="c al" style="left:166px;width:95px"><span class="k24">Mitg/Gönn.</span></div><div class="c al" style="left:261px;width:80px"></div><div class="c al" style="left:341px;width:96px"></div><div class="c ar" style="left:437px;width:80px"><span class="k26">0.00</span></div><div class="c ar" style="left:517px;width:99px"><span class="k26">0.00</span></div><div class="c ar" style="left:616px;width:99px"></div><div class="c ar" style="left:715px;width:80px"><span class="k27">40.00</span></div><div class="c al" style="left:795px;width:155px"><span class="k31">Vereinsversammlung 2016</span></div><div class="c al" style="left:950px;width:80px"></div><div class="c al" style="left:1030px;width:88px"><span class="k34">allgemeine Sp…</span></div><div class="c ac" style="left:1118px;width:77px"><i class="cb ck"></i></div><div class="c al" style="left:1195px;width:112px"></div><div class="c al dt" style="left:1307px;width:89px"><span class="k36">14.03.2016</span></div><div class="c al" style="left:1396px;width:149px"></div><div class="c al" style="left:1545px;width:156px"></div></div>
<div class="row" style="top:339px"><div class="ic" style="left:0;width:16px"></div><div class="c al" style="left:16px;width:150px"></div><div class="c al" style="left:166px;width:95px"><span class="k24">Mitg/Gönn.</span></div><div class="c al" style="left:261px;width:80px"></div><div class="c al" style="left:341px;width:96px"></div><div class="c ar" style="left:437px;width:80px"><span class="k26">0.00</span></div><div class="c ar" style="left:517px;width:99px"><span class="k26">0.00</span></div><div class="c ar" style="left:616px;width:99px"></div><div class="c ar" style="left:715px;width:80px"><span class="k27">40.00</span></div><div class="c al" style="left:795px;width:155px"><span class="k31">Vereinsversammlung 2016</span></div><div class="c al" style="left:950px;width:80px"></div><div class="c al" style="left:1030px;width:88px"><span class="k34">allgemeine Sp…</span></div><div class="c ac" style="left:1118px;width:77px"><i class="cb ck"></i></div><div class="c al" style="left:1195px;width:112px"></div><div class="c al dt" style="left:1307px;width:89px"><span class="k36">14.03.2016</span></div><div class="c al" style="left:1396px;width:149px"></div><div class="c al" style="left:1545px;width:156px"></div></div>
<div class="row alt" style="top:360px"><div class="ic" style="left:0;width:16px"></div><div class="c al" style="left:16px;width:150px"></div><div class="c al" style="left:166px;width:95px"><span class="k24">Mitg/Gönn.</span></div><div class="c al" style="left:261px;width:80px"></div><div class="c al" style="left:341px;width:96px"></div><div class="c ar" style="left:437px;width:80px"><span class="k26">0.00</span></div><div class="c ar" style="left:517px;width:99px"><span class="k26">0.00</span></div><div class="c ar" style="left:616px;width:99px"></div><div class="c ar" style="left:715px;width:80px"><span class="k27">40.00</span></div><div class="c al" style="left:795px;width:155px"><span class="k31">Vereinsversammlung 2016</span></div><div class="c al" style="left:950px;width:80px"></div><div class="c al" style="left:1030px;width:88px"><span class="k34">allgemeine Sp…</span></div><div class="c ac" style="left:1118px;width:77px"><i class="cb ck"></i></div><div class="c al" style="left:1195px;width:112px"></div><div class="c al dt" style="left:1307px;width:89px"><span class="k36">14.03.2016</span></div><div class="c al" style="left:1396px;width:149px"></div><div class="c al" style="left:1545px;width:156px"></div></div>
<div class="row" style="top:381px"><div class="ic" style="left:0;width:16px"></div><div class="c al" style="left:16px;width:150px"></div><div class="c al" style="left:166px;width:95px"><span class="k24">Mitg/Gönn.</span></div><div class="c al" style="left:261px;width:80px"></div><div class="c al" style="left:341px;width:96px"></div><div class="c ar" style="left:437px;width:80px"><span class="k26">0.00</span></div><div class="c ar" style="left:517px;width:99px"><span class="k26">0.00</span></div><div class="c ar" style="left:616px;width:99px"></div><div class="c ar" style="left:715px;width:80px"><span class="k27">40.00</span></div><div class="c al" style="left:795px;width:155px"><span class="k31">Vereinsversammlung 2016</span></div><div class="c al" style="left:950px;width:80px"></div><div class="c al" style="left:1030px;width:88px"><span class="k34">allgemeine Sp…</span></div><div class="c ac" style="left:1118px;width:77px"><i class="cb ck"></i></div><div class="c al" style="left:1195px;width:112px"></div><div class="c al dt" style="left:1307px;width:89px"><span class="k36">14.03.2016</span></div><div class="c al" style="left:1396px;width:149px"></div><div class="c al" style="left:1545px;width:156px"></div></div>
<div class="row alt" style="top:402px"><div class="ic" style="left:0;width:16px"></div><div class="c al" style="left:16px;width:150px"></div><div class="c al" style="left:166px;width:95px"><span class="k24">Mitg/Gönn.</span></div><div class="c al" style="left:261px;width:80px"></div><div class="c al" style="left:341px;width:96px"></div><div class="c ar" style="left:437px;width:80px"><span class="k26">0.00</span></div><div class="c ar" style="left:517px;width:99px"><span class="k26">0.00</span></div><div class="c ar" style="left:616px;width:99px"></div><div class="c ar" style="left:715px;width:80px"><span class="k27">40.00</span></div><div class="c al" style="left:795px;width:155px"><span class="k31">Vereinsversammlung 2016</span></div><div class="c al" style="left:950px;width:80px"></div><div class="c al" style="left:1030px;width:88px"><span class="k34">allgemeine Sp…</span></div><div class="c ac" style="left:1118px;width:77px"><i class="cb ck"></i></div><div class="c al" style="left:1195px;width:112px"></div><div class="c al dt" style="left:1307px;width:89px"><span class="k36">14.03.2016</span></div><div class="c al" style="left:1396px;width:149px"></div><div class="c al" style="left:1545px;width:156px"></div></div>
<div class="row" style="top:423px"><div class="ic" style="left:0;width:16px"></div><div class="c al" style="left:16px;width:150px"></div><div class="c al" style="left:166px;width:95px"><span class="k24">Mitg/Gönn.</span></div><div class="c al" style="left:261px;width:80px"></div><div class="c al" style="left:341px;width:96px"></div><div class="c ar" style="left:437px;width:80px"><span class="k26">0.00</span></div><div class="c ar" style="left:517px;width:99px"><span class="k26">0.00</span></div><div class="c ar" style="left:616px;width:99px"></div><div class="c ar" style="left:715px;width:80px"><span class="k27">40.00</span></div><div class="c al" style="left:795px;width:155px"><span class="k31">Vereinsversammlung 2016</span></div><div class="c al" style="left:950px;width:80px"></div><div class="c al" style="left:1030px;width:88px"><span class="k34">allgemeine Sp…</span></div><div class="c ac" style="left:1118px;width:77px"><i class="cb ck"></i></div><div class="c al" style="left:1195px;width:112px"></div><div class="c al dt" style="left:1307px;width:89px"><span class="k36">14.03.2016</span></div><div class="c al" style="left:1396px;width:149px"></div><div class="c al" style="left:1545px;width:156px"></div></div>
<div class="row alt" style="top:444px"><div class="ic" style="left:0;width:16px"></div><div class="c al" style="left:16px;width:150px"></div><div class="c al" style="left:166px;width:95px"><span class="k24">Mitg/Gönn.</span></div><div class="c al" style="left:261px;width:80px"></div><div class="c al" style="left:341px;width:96px"></div><div class="c ar" style="left:437px;width:80px"><span class="k26">0.00</span></div><div class="c ar" style="left:517px;width:99px"><span class="k26">0.00</span></div><div class="c ar" style="left:616px;width:99px"></div><div class="c ar" style="left:715px;width:80px"><span class="k27">40.00</span></div><div class="c al" style="left:795px;width:155px"><span class="k31">Vereinsversammlung 2016</span></div><div class="c al" style="left:950px;width:80px"></div><div class="c al" style="left:1030px;width:88px"><span class="k34">allgemeine Sp…</span></div><div class="c ac" style="left:1118px;width:77px"><i class="cb ck"></i></div><div class="c al" style="left:1195px;width:112px"></div><div class="c al dt" style="left:1307px;width:89px"><span class="k36">14.03.2016</span></div><div class="c al" style="left:1396px;width:149px"></div><div class="c al" style="left:1545px;width:156px"></div></div>
<div class="row" style="top:465px"><div class="ic" style="left:0;width:16px"></div><div class="c al" style="left:16px;width:150px"></div><div class="c al" style="left:166px;width:95px"><span class="k24">Mitg/Gönn.</span></div><div class="c al" style="left:261px;width:80px"></div><div class="c al" style="left:341px;width:96px"></div><div class="c ar" style="left:437px;width:80px"><span class="k26">0.00</span></div><div class="c ar" style="left:517px;width:99px"><span class="k26">0.00</span></div><div class="c ar" style="left:616px;width:99px"></div><div class="c ar" style="left:715px;width:80px"><span class="k27">40.00</span></div><div class="c al" style="left:795px;width:155px"><span class="k31">Vereinsversammlung 2016</span></div><div class="c al" style="left:950px;width:80px"></div><div class="c al" style="left:1030px;width:88px"><span class="k34">allgemeine Sp…</span></div><div class="c ac" style="left:1118px;width:77px"><i class="cb ck"></i></div><div class="c al" style="left:1195px;width:112px"></div><div class="c al dt" style="left:1307px;width:89px"><span class="k36">14.03.2016</span></div><div class="c al" style="left:1396px;width:149px"></div><div class="c al" style="left:1545px;width:156px"></div></div>
<div class="row alt" style="top:486px"><div class="ic" style="left:0;width:16px"></div><div class="c al" style="left:16px;width:150px"></div><div class="c al" style="left:166px;width:95px"><span class="k24">Mitg/Gönn.</span></div><div class="c al" style="left:261px;width:80px"></div><div class="c al" style="left:341px;width:96px"></div><div class="c ar" style="left:437px;width:80px"><span class="k26">0.00</span></div><div class="c ar" style="left:517px;width:99px"><span class="k26">0.00</span></div><div class="c ar" style="left:616px;width:99px"></div><div class="c ar" style="left:715px;width:80px"><span class="k27">40.00</span></div><div class="c al" style="left:795px;width:155px"><span class="k31">Vereinsversammlung 2016</span></div><div class="c al" style="left:950px;width:80px"></div><div class="c al" style="left:1030px;width:88px"><span class="k34">allgemeine Sp…</span></div><div class="c ac" style="left:1118px;width:77px"><i class="cb ck"></i></div><div class="c al" style="left:1195px;width:112px"></div><div class="c al dt" style="left:1307px;width:89px"><span class="k36">14.03.2016</span></div><div class="c al" style="left:1396px;width:149px"></div><div class="c al" style="left:1545px;width:156px"></div></div>
<div class="row" style="top:507px"><div class="ic" style="left:0;width:16px"></div><div class="c al" style="left:16px;width:150px"></div><div class="c al" style="left:166px;width:95px"><span class="k24">Mitg/Gönn.</span></div><div class="c al" style="left:261px;width:80px"></div><div class="c al" style="left:341px;width:96px"></div><div class="c ar" style="left:437px;width:80px"><span class="k26">0.00</span></div><div class="c ar" style="left:517px;width:99px"><span class="k26">0.00</span></div><div class="c ar" style="left:616px;width:99px"></div><div class="c ar" style="left:715px;width:80px"><span class="k27">40.00</span></div><div class="c al" style="left:795px;width:155px"><span class="k31">Vereinsversammlung 2016</span></div><div class="c al" style="left:950px;width:80px"></div><div class="c al" style="left:1030px;width:88px"><span class="k34">allgemeine Sp…</span></div><div class="c ac" style="left:1118px;width:77px"><i class="cb ck"></i></div><div class="c al" style="left:1195px;width:112px"></div><div class="c al dt" style="left:1307px;width:89px"><span class="k36">14.03.2016</span></div><div class="c al" style="left:1396px;width:149px"></div><div class="c al" style="left:1545px;width:156px"></div></div>
<div class="row alt" style="top:528px"><div class="ic" style="left:0;width:16px"></div><div class="c al" style="left:16px;width:150px"></div><div class="c al" style="left:166px;width:95px"><span class="k24">Mitg/Gönn.</span></div><div class="c al" style="left:261px;width:80px"></div><div class="c al" style="left:341px;width:96px"></div><div class="c ar" style="left:437px;width:80px"><span class="k26">0.00</span></div><div class="c ar" style="left:517px;width:99px"><span class="k26">0.00</span></div><div class="c ar" style="left:616px;width:99px"></div><div class="c ar" style="left:715px;width:80px"><span class="k27">40.00</span></div><div class="c al" style="left:795px;width:155px"><span class="k31">Vereinsversammlung 2016</span></div><div class="c al" style="left:950px;width:80px"></div><div class="c al" style="left:1030px;width:88px"><span class="k34">allgemeine Sp…</span></div><div class="c ac" style="left:1118px;width:77px"><i class="cb ck"></i></div><div class="c al" style="left:1195px;width:112px"></div><div class="c al dt" style="left:1307px;width:89px"><span class="k36">14.03.2016</span></div><div class="c al" style="left:1396px;width:149px"></div><div class="c al" style="left:1545px;width:156px"></div></div>
<div class="row" style="top:549px"><div class="ic" style="left:0;width:16px"></div><div class="c al" style="left:16px;width:150px"></div><div class="c al" style="left:166px;width:95px"><span class="k24">Mitg/Gönn.</span></div><div class="c al" style="left:261px;width:80px"></div><div class="c al" style="left:341px;width:96px"></div><div class="c ar" style="left:437px;width:80px"><span class="k26">0.00</span></div><div class="c ar" style="left:517px;width:99px"><span class="k26">0.00</span></div><div class="c ar" style="left:616px;width:99px"></div><div class="c ar" style="left:715px;width:80px"><span class="k27">40.00</span></div><div class="c al" style="left:795px;width:155px"><span class="k31">Vereinsversammlung 2016</span></div><div class="c al" style="left:950px;width:80px"></div><div class="c al" style="left:1030px;width:88px"><span class="k34">allgemeine Sp…</span></div><div class="c ac" style="left:1118px;width:77px"><i class="cb ck"></i></div><div class="c al" style="left:1195px;width:112px"></div><div class="c al dt" style="left:1307px;width:89px"><span class="k36">14.03.2016</span></div><div class="c al" style="left:1396px;width:149px"></div><div class="c al" style="left:1545px;width:156px"></div></div>
<div class="row alt" style="top:570px"><div class="ic" style="left:0;width:16px"></div><div class="c al" style="left:16px;width:150px"></div><div class="c al" style="left:166px;width:95px"><span class="k24">Mitg/Gönn.</span></div><div class="c al" style="left:261px;width:80px"></div><div class="c al" style="left:341px;width:96px"></div><div class="c ar" style="left:437px;width:80px"><span class="k26">0.00</span></div><div class="c ar" style="left:517px;width:99px"><span class="k26">0.00</span></div><div class="c ar" style="left:616px;width:99px"></div><div class="c ar" style="left:715px;width:80px"><span class="k27">40.00</span></div><div class="c al" style="left:795px;width:155px"><span class="k31">Vereinsversammlung 2016</span></div><div class="c al" style="left:950px;width:80px"></div><div class="c al" style="left:1030px;width:88px"><span class="k34">allgemeine Sp…</span></div><div class="c ac" style="left:1118px;width:77px"><i class="cb ck"></i></div><div class="c al" style="left:1195px;width:112px"></div><div class="c al dt" style="left:1307px;width:89px"><span class="k36">14.03.2016</span></div><div class="c al" style="left:1396px;width:149px"></div><div class="c al" style="left:1545px;width:156px"></div></div>
<div class="row" style="top:591px"><div class="ic" style="left:0;width:16px"></div><div class="c al" style="left:16px;width:150px"></div><div class="c al" style="left:166px;width:95px"><span class="k24">Mitg/Gönn.</span></div><div class="c al" style="left:261px;width:80px"></div><div class="c al" style="left:341px;width:96px"></div><div class="c ar" style="left:437px;width:80px"><span class="k26">0.00</span></div><div class="c ar" style="left:517px;width:99px"><span class="k26">0.00</span></div><div class="c ar" style="left:616px;width:99px"></div><div class="c ar" style="left:715px;width:80px"><span class="k27">40.00</span></div><div class="c al" style="left:795px;width:155px"><span class="k31">Vereinsversammlung 2016</span></div><div class="c al" style="left:950px;width:80px"></div><div class="c al" style="left:1030px;width:88px"><span class="k34">allgemeine Sp…</span></div><div class="c ac" style="left:1118px;width:77px"><i class="cb ck"></i></div><div class="c al" style="left:1195px;width:112px"></div><div class="c al dt" style="left:1307px;width:89px"><span class="k36">14.03.2016</span></div><div class="c al" style="left:1396px;width:149px"></div><div class="c al" style="left:1545px;width:156px"></div></div>
<div class="row alt" style="top:612px"><div class="ic" style="left:0;width:16px"></div><div class="c al" style="left:16px;width:150px"></div><div class="c al" style="left:166px;width:95px"><span class="k24">Mitg/Gönn.</span></div><div class="c al" style="left:261px;width:80px"></div><div class="c al" style="left:341px;width:96px"></div><div class="c ar" style="left:437px;width:80px"><span class="k26">0.00</span></div><div class="c ar" style="left:517px;width:99px"><span class="k26">0.00</span></div><div class="c ar" style="left:616px;width:99px"></div><div class="c ar" style="left:715px;width:80px"><span class="k27">40.00</span></div><div class="c al" style="left:795px;width:155px"><span class="k31">Vereinsversammlung 2016</span></div><div class="c al" style="left:950px;width:80px"></div><div class="c al" style="left:1030px;width:88px"><span class="k34">allgemeine Sp…</span></div><div class="c ac" style="left:1118px;width:77px"><i class="cb ck"></i></div><div class="c al" style="left:1195px;width:112px"></div><div class="c al dt" style="left:1307px;width:89px"><span class="k36">14.03.2016</span></div><div class="c al" style="left:1396px;width:149px"></div><div class="c al" style="left:1545px;width:156px"></div></div>
<div class="row" style="top:633px"><div class="ic" style="left:0;width:16px"></div><div class="c al" style="left:16px;width:150px"></div><div class="c al" style="left:166px;width:95px"><span class="k24">Mitg/Gönn.</span></div><div class="c al" style="left:261px;width:80px"></div><div class="c al" style="left:341px;width:96px"></div><div class="c ar" style="left:437px;width:80px"><span class="k26">0.00</span></div><div class="c ar" style="left:517px;width:99px"><span class="k26">0.00</span></div><div class="c ar" style="left:616px;width:99px"></div><div class="c ar" style="left:715px;width:80px"><span class="k27">40.00</span></div><div class="c al" style="left:795px;width:155px"><span class="k31">Vereinsversammlung 2016</span></div><div class="c al" style="left:950px;width:80px"></div><div class="c al" style="left:1030px;width:88px"><span class="k34">allgemeine Sp…</span></div><div class="c ac" style="left:1118px;width:77px"><i class="cb ck"></i></div><div class="c al" style="left:1195px;width:112px"></div><div class="c al dt" style="left:1307px;width:89px"><span class="k36">14.03.2016</span></div><div class="c al" style="left:1396px;width:149px"></div><div class="c al" style="left:1545px;width:156px"></div></div>
<div class="row alt" style="top:654px"><div class="ic" style="left:0;width:16px"></div><div class="c al" style="left:16px;width:150px"></div><div class="c al" style="left:166px;width:95px"><span class="k24">Mitg/Gönn.</span></div><div class="c al" style="left:261px;width:80px"></div><div class="c al" style="left:341px;width:96px"></div><div class="c ar" style="left:437px;width:80px"><span class="k26">0.00</span></div><div class="c ar" style="left:517px;width:99px"><span class="k26">0.00</span></div><div class="c ar" style="left:616px;width:99px"></div><div class="c ar" style="left:715px;width:80px"><span class="k27">40.00</span></div><div class="c al" style="left:795px;width:155px"><span class="k31">Vereinsversammlung 2016</span></div><div class="c al" style="left:950px;width:80px"></div><div class="c al" style="left:1030px;width:88px"><span class="k34">allgemeine Sp…</span></div><div class="c ac" style="left:1118px;width:77px"><i class="cb ck"></i></div><div class="c al" style="left:1195px;width:112px"></div><div class="c al dt" style="left:1307px;width:89px"><span class="k36">14.03.2016</span></div><div class="c al" style="left:1396px;width:149px"></div><div class="c al" style="left:1545px;width:156px"></div></div>
<div class="row" style="top:675px"><div class="ic" style="left:0;width:16px"></div><div class="c al" style="left:16px;width:150px"></div><div class="c al" style="left:166px;width:95px"><span class="k24">Mitg/Gönn.</span></div><div class="c al" style="left:261px;width:80px"></div><div class="c al" style="left:341px;width:96px"></div><div class="c ar" style="left:437px;width:80px"><span class="k26">0.00</span></div><div class="c ar" style="left:517px;width:99px"><span class="k26">0.00</span></div><div class="c ar" style="left:616px;width:99px"></div><div class="c ar" style="left:715px;width:80px"><span class="k27">40.00</span></div><div class="c al" style="left:795px;width:155px"><span class="k31">Vereinsversammlung 2016</span></div><div class="c al" style="left:950px;width:80px"></div><div class="c al" style="left:1030px;width:88px"><span class="k34">allgemeine Sp…</span></div><div class="c ac" style="left:1118px;width:77px"><i class="cb ck"></i></div><div class="c al" style="left:1195px;width:112px"></div><div class="c al dt" style="left:1307px;width:89px"><span class="k36">14.03.2016</span></div><div class="c al" style="left:1396px;width:149px"></div><div class="c al" style="left:1545px;width:156px"></div></div>
<div class="row alt" style="top:696px"><div class="ic" style="left:0;width:16px"></div><div class="c al" style="left:16px;width:150px"></div><div class="c al" style="left:166px;width:95px"><span class="k24">Mitg/Gönn.</span></div><div class="c al" style="left:261px;width:80px"></div><div class="c al" style="left:341px;width:96px"></div><div class="c ar" style="left:437px;width:80px"><span class="k26">0.00</span></div><div class="c ar" style="left:517px;width:99px"><span class="k26">0.00</span></div><div class="c ar" style="left:616px;width:99px"></div><div class="c ar" style="left:715px;width:80px"><span class="k27">40.00</span></div><div class="c al" style="left:795px;width:155px"><span class="k31">Vereinsversammlung 2016</span></div><div class="c al" style="left:950px;width:80px"></div><div class="c al" style="left:1030px;width:88px"><span class="k34">allgemeine Sp…</span></div><div class="c ac" style="left:1118px;width:77px"><i class="cb ck"></i></div><div class="c al" style="left:1195px;width:112px"></div><div class="c al dt" style="left:1307px;width:89px"><span class="k36">14.03.2016</span></div><div class="c al" style="left:1396px;width:149px"></div><div class="c al" style="left:1545px;width:156px"></div></div>
<div class="row" style="top:717px"><div class="ic" style="left:0;width:16px"></div><div class="c al" style="left:16px;width:150px"></div><div class="c al" style="left:166px;width:95px"><span class="k24">Mitg/Gönn.</span></div><div class="c al" style="left:261px;width:80px"></div><div class="c al" style="left:341px;width:96px"></div><div class="c ar" style="left:437px;width:80px"><span class="k26">0.00</span></div><div class="c ar" style="left:517px;width:99px"><span class="k26">0.00</span></div><div class="c ar" style="left:616px;width:99px"></div><div class="c ar" style="left:715px;width:80px"><span class="k27">40.00</span></div><div class="c al" style="left:795px;width:155px"><span class="k31">Vereinsversammlung 2016</span></div><div class="c al" style="left:950px;width:80px"></div><div class="c al" style="left:1030px;width:88px"><span class="k34">allgemeine Sp…</span></div><div class="c ac" style="left:1118px;width:77px"><i class="cb ck"></i></div><div class="c al" style="left:1195px;width:112px"></div><div class="c al dt" style="left:1307px;width:89px"><span class="k36">14.03.2016</span></div><div class="c al" style="left:1396px;width:149px"></div><div class="c al" style="left:1545px;width:156px"></div></div>
<div class="row alt" style="top:738px"><div class="ic" style="left:0;width:16px"></div><div class="c al" style="left:16px;width:150px"></div><div class="c al" style="left:166px;width:95px"><span class="k24">Mitg/Gönn.</span></div><div class="c al" style="left:261px;width:80px"></div><div class="c al" style="left:341px;width:96px"></div><div class="c ar" style="left:437px;width:80px"><span class="k26">0.00</span></div><div class="c ar" style="left:517px;width:99px"><span class="k26">0.00</span></div><div class="c ar" style="left:616px;width:99px"></div><div class="c ar" style="left:715px;width:80px"><span class="k27">40.00</span></div><div class="c al" style="left:795px;width:155px"><span class="k31">Vereinsversammlung 2016</span></div><div class="c al" style="left:950px;width:80px"></div><div class="c al" style="left:1030px;width:88px"><span class="k34">allgemeine Sp…</span></div><div class="c ac" style="left:1118px;width:77px"><i class="cb ck"></i></div><div class="c al" style="left:1195px;width:112px"></div><div class="c al dt" style="left:1307px;width:89px"><span class="k36">14.03.2016</span></div><div class="c al" style="left:1396px;width:149px"></div><div class="c al" style="left:1545px;width:156px"></div></div>
<div class="row" style="top:759px"><div class="ic" style="left:0;width:16px"></div><div class="c al" style="left:16px;width:150px"></div><div class="c al" style="left:166px;width:95px"><span class="k24">Mitg/Gönn.</span></div><div class="c al" style="left:261px;width:80px"></div><div class="c al" style="left:341px;width:96px"></div><div class="c ar" style="left:437px;width:80px"><span class="k26">0.00</span></div><div class="c ar" style="left:517px;width:99px"><span class="k26">0.00</span></div><div class="c ar" style="left:616px;width:99px"></div><div class="c ar" style="left:715px;width:80px"><span class="k27">40.00</span></div><div class="c al" style="left:795px;width:155px"><span class="k31">Vereinsversammlung 2016</span></div><div class="c al" style="left:950px;width:80px"></div><div class="c al" style="left:1030px;width:88px"><span class="k34">allgemeine Sp…</span></div><div class="c ac" style="left:1118px;width:77px"><i class="cb ck"></i></div><div class="c al" style="left:1195px;width:112px"></div><div class="c al dt" style="left:1307px;width:89px"><span class="k36">14.03.2016</span></div><div class="c al" style="left:1396px;width:149px"></div><div class="c al" style="left:1545px;width:156px"></div></div>
<div class="row alt" style="top:780px"><div class="ic" style="left:0;width:16px"></div><div class="c al" style="left:16px;width:150px"></div><div class="c al" style="left:166px;width:95px"><span class="k24">Mitg/Gönn.</span></div><div class="c al" style="left:261px;width:80px"></div><div class="c al" style="left:341px;width:96px"></div><div class="c ar" style="left:437px;width:80px"><span class="k26">0.00</span></div><div class="c ar" style="left:517px;width:99px"><span class="k26">0.00</span></div><div class="c ar" style="left:616px;width:99px"></div><div class="c ar" style="left:715px;width:80px"><span class="k27">40.00</span></div><div class="c al" style="left:795px;width:155px"><span class="k31">Vereinsversammlung 2016</span></div><div class="c al" style="left:950px;width:80px"></div><div class="c al" style="left:1030px;width:88px"><span class="k34">allgemeine Sp…</span></div><div class="c ac" style="left:1118px;width:77px"><i class="cb ck"></i></div><div class="c al" style="left:1195px;width:112px"></div><div class="c al dt" style="left:1307px;width:89px"><span class="k36">14.03.2016</span></div><div class="c al" style="left:1396px;width:149px"></div><div class="c al" style="left:1545px;width:156px"></div></div>
<div class="row" style="top:801px"><div class="ic" style="left:0;width:16px"></div><div class="c al" style="left:16px;width:150px"></div><div class="c al" style="left:166px;width:95px"><span class="k24">Mitg/Gönn.</span></div><div class="c al" style="left:261px;width:80px"></div><div class="c al" style="left:341px;width:96px"></div><div class="c ar" style="left:437px;width:80px"><span class="k26">0.00</span></div><div class="c ar" style="left:517px;width:99px"><span class="k26">0.00</span></div><div class="c ar" style="left:616px;width:99px"></div><div class="c ar" style="left:715px;width:80px"><span class="k27">40.00</span></div><div class="c al" style="left:795px;width:155px"><span class="k31">Vereinsversammlung 2016</span></div><div class="c al" style="left:950px;width:80px"></div><div class="c al" style="left:1030px;width:88px"><span class="k34">allgemeine Sp…</span></div><div class="c ac" style="left:1118px;width:77px"><i class="cb ck"></i></div><div class="c al" style="left:1195px;width:112px"></div><div class="c al dt" style="left:1307px;width:89px"><span class="k36">14.03.2016</span></div><div class="c al" style="left:1396px;width:149px"></div><div class="c al" style="left:1545px;width:156px"></div></div>
<div class="row alt" style="top:822px"><div class="ic" style="left:0;width:16px"></div><div class="c al" style="left:16px;width:150px"></div><div class="c al" style="left:166px;width:95px"></div><div class="c al" style="left:261px;width:80px"></div><div class="c al" style="left:341px;width:96px"></div><div class="c ar" style="left:437px;width:80px"></div><div class="c ar" style="left:517px;width:99px"></div><div class="c ar" style="left:616px;width:99px"></div><div class="c ar" style="left:715px;width:80px"></div><div class="c al" style="left:795px;width:155px"></div><div class="c al" style="left:950px;width:80px"></div><div class="c al" style="left:1030px;width:88px"></div><div class="c ac" style="left:1118px;width:77px"></div><div class="c al" style="left:1195px;width:112px"></div><div class="c al" style="left:1307px;width:89px"></div><div class="c al" style="left:1396px;width:149px"></div><div class="c al" style="left:1545px;width:156px"></div></div>
<div class="vs">
<svg class="abs" style="left:5px;top:6px" width="7" height="4" viewBox="0 0 7 4"><path d="M0 4H7L3.5 0.2z" fill="#6e6e80"/></svg>
<div class="abs" style="left:5px;top:17px;width:7px;height:17px;border:1px solid #b0b0bc;border-radius:4px;background:linear-gradient(90deg,#ececf0,#dcdce2)"></div>
<svg class="abs" style="left:5px;top:792px" width="7" height="4" viewBox="0 0 7 4"><path d="M0 0H7L3.5 3.8z" fill="#6e6e80"/></svg>
</div>
<div class="foot">
<div class="sb" style="left:438px;width:78px"><span class="k26">0.00</span></div>
<div class="sb" style="left:518px;width:97px"><span class="k26">0.00</span></div>
<div class="sb" style="left:617px;width:97px"><span class="k26">0.00</span></div>
<div class="sb" style="left:716px;width:78px"><span class="k37">157 890.00</span></div>
</div>
<div class="hs">
<svg class="abs" style="left:6px;top:5px" width="4" height="7" viewBox="0 0 4 7"><path d="M4 0V7L0.2 3.5z" fill="#c8c8d0"/></svg>
<svg class="abs" style="left:1902px;top:5px" width="4" height="7" viewBox="0 0 4 7"><path d="M0 0V7L3.8 3.5z" fill="#c8c8d0"/></svg>
</div>
</div>
</body></html>
